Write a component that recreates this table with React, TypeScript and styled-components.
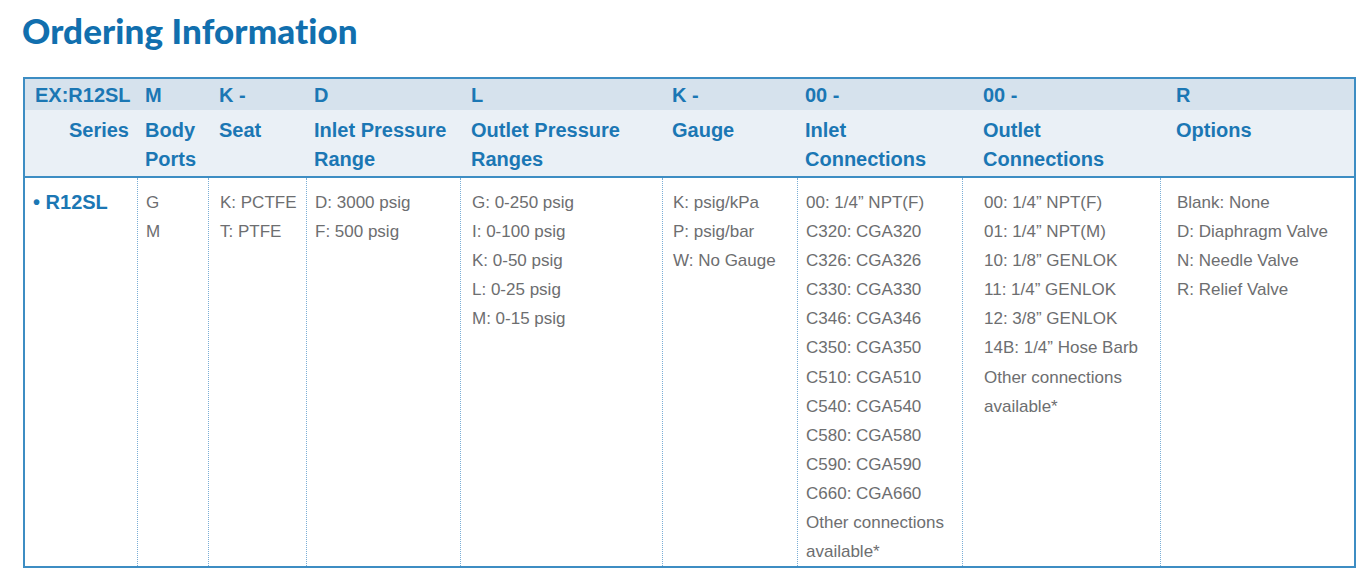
import React from "react";
import styled, { createGlobalStyle } from "styled-components";

const GlobalStyle = createGlobalStyle`
  html, body { margin: 0; padding: 0; background: #ffffff; }
  body { font-family: "Liberation Sans", Arial, sans-serif; }
`;

const COLS = "112px 71px 98px 154px 202px 135px 165px 198px 194px";

const Page = styled.div`
  padding: 10px 0 0 23px;
  width: 1333px;
`;

const Title = styled.h1`
  margin: 0 0 27px -1px;
  font-family: "Lato", "Noto Sans", sans-serif;
  font-weight: 900;
  font-size: 35px;
  line-height: 40px;
  color: #116fae;
  letter-spacing: 0.1px;
`;

const Table = styled.div`
  box-sizing: border-box;
  width: 1333px;
  border: 2px solid #3d8dc3;
`;

const Row = styled.div`
  display: grid;
  grid-template-columns: ${COLS};
`;

const CodeRow = styled(Row)`
  background: #d6e2ed;
  padding-top: 2px;
  height: 31px;
  box-sizing: border-box;
`;

const LabelRow = styled(Row)`
  background: #eaf0f6;
  padding: 6px 0 2px;
  border-bottom: 2px solid #3d8dc3;
`;

const BodyRow = styled(Row)`
  padding: 0;
`;

const HeadCell = styled.div<{ $pad: number; $right?: boolean }>`
  padding-left: ${(p) => (p.$right ? 0 : p.$pad)}px;
  padding-right: ${(p) => (p.$right ? 8 : 0)}px;
  text-align: ${(p) => (p.$right ? "right" : "left")};
  font-family: "Liberation Sans", Arial, sans-serif;
  font-weight: 700;
  font-size: 20px;
  line-height: 29px;
  color: #1b77b4;
  white-space: nowrap;
`;

const BodyCell = styled.div<{ $pad: number; $first?: boolean }>`
  padding: 10px 0 0 ${(p) => p.$pad}px;
  border-left: ${(p) => (p.$first ? "none" : "1px dotted #7aaed6")};
  font-size: 17px;
  line-height: 29.1px;
  color: #6d6e70;
  white-space: nowrap;
`;

const SeriesName = styled.div`
  font-weight: 700;
  font-size: 20px;
  line-height: 29px;
  color: #1b77b4;
`;

const Line = styled.div``;

type Col = { code: string; label: string[]; pad: number; items: string[] };

const columns: Col[] = [
  { code: "EX:R12SL", label: ["Series"], pad: 10, items: [] },
  { code: "M", label: ["Body", "Ports"], pad: 8, items: ["G", "M"] },
  { code: "K -", label: ["Seat"], pad: 11, items: ["K: PCTFE", "T: PTFE"] },
  { code: "D", label: ["Inlet Pressure", "Range"], pad: 8, items: ["D: 3000 psig", "F: 500 psig"] },
  {
    code: "L",
    label: ["Outlet Pressure", "Ranges"],
    pad: 11,
    items: ["G: 0-250 psig", "I: 0-100 psig", "K: 0-50 psig", "L: 0-25 psig", "M: 0-15 psig"],
  },
  { code: "K -", label: ["Gauge"], pad: 10, items: ["K: psig/kPa", "P: psig/bar", "W: No Gauge"] },
  {
    code: "00 -",
    label: ["Inlet", "Connections"],
    pad: 8,
    items: [
      "00: 1/4\u201D NPT(F)",
      "C320: CGA320",
      "C326: CGA326",
      "C330: CGA330",
      "C346: CGA346",
      "C350: CGA350",
      "C510: CGA510",
      "C540: CGA540",
      "C580: CGA580",
      "C590: CGA590",
      "C660: CGA660",
      "Other connections",
      "available*",
    ],
  },
  {
    code: "00 -",
    label: ["Outlet", "Connections"],
    pad: 21,
    items: [
      "00: 1/4\u201D NPT(F)",
      "01: 1/4\u201D NPT(M)",
      "10: 1/8\u201D GENLOK",
      "11: 1/4\u201D GENLOK",
      "12: 3/8\u201D GENLOK",
      "14B: 1/4\u201D Hose Barb",
      "Other connections",
      "available*",
    ],
  },
  {
    code: "R",
    label: ["Options"],
    pad: 16,
    items: ["Blank: None", "D: Diaphragm Valve", "N: Needle Valve", "R: Relief Valve"],
  },
];

export default function App() {
  return (
    <>
      <GlobalStyle />
      <Page>
        <Title>Ordering Information</Title>
        <Table>
          <CodeRow>
            {columns.map((c, i) => (
              <HeadCell key={i} $pad={c.pad}>
                {c.code}
              </HeadCell>
            ))}
          </CodeRow>
          <LabelRow>
            {columns.map((c, i) => (
              <HeadCell key={i} $pad={c.pad} $right={i === 0}>
                {c.label.map((l, j) => (
                  <Line key={j}>{l}</Line>
                ))}
              </HeadCell>
            ))}
          </LabelRow>
          <BodyRow>
            {columns.map((c, i) =>
              i === 0 ? (
                <BodyCell key={i} $pad={8} $first>
                  <SeriesName>{"\u2022 R12SL"}</SeriesName>
                </BodyCell>
              ) : (
                <BodyCell key={i} $pad={c.pad}>
                  {c.items.map((t, j) => (
                    <Line key={j}>{t}</Line>
                  ))}
                </BodyCell>
              )
            )}
          </BodyRow>
        </Table>
      </Page>
    </>
  );
}
